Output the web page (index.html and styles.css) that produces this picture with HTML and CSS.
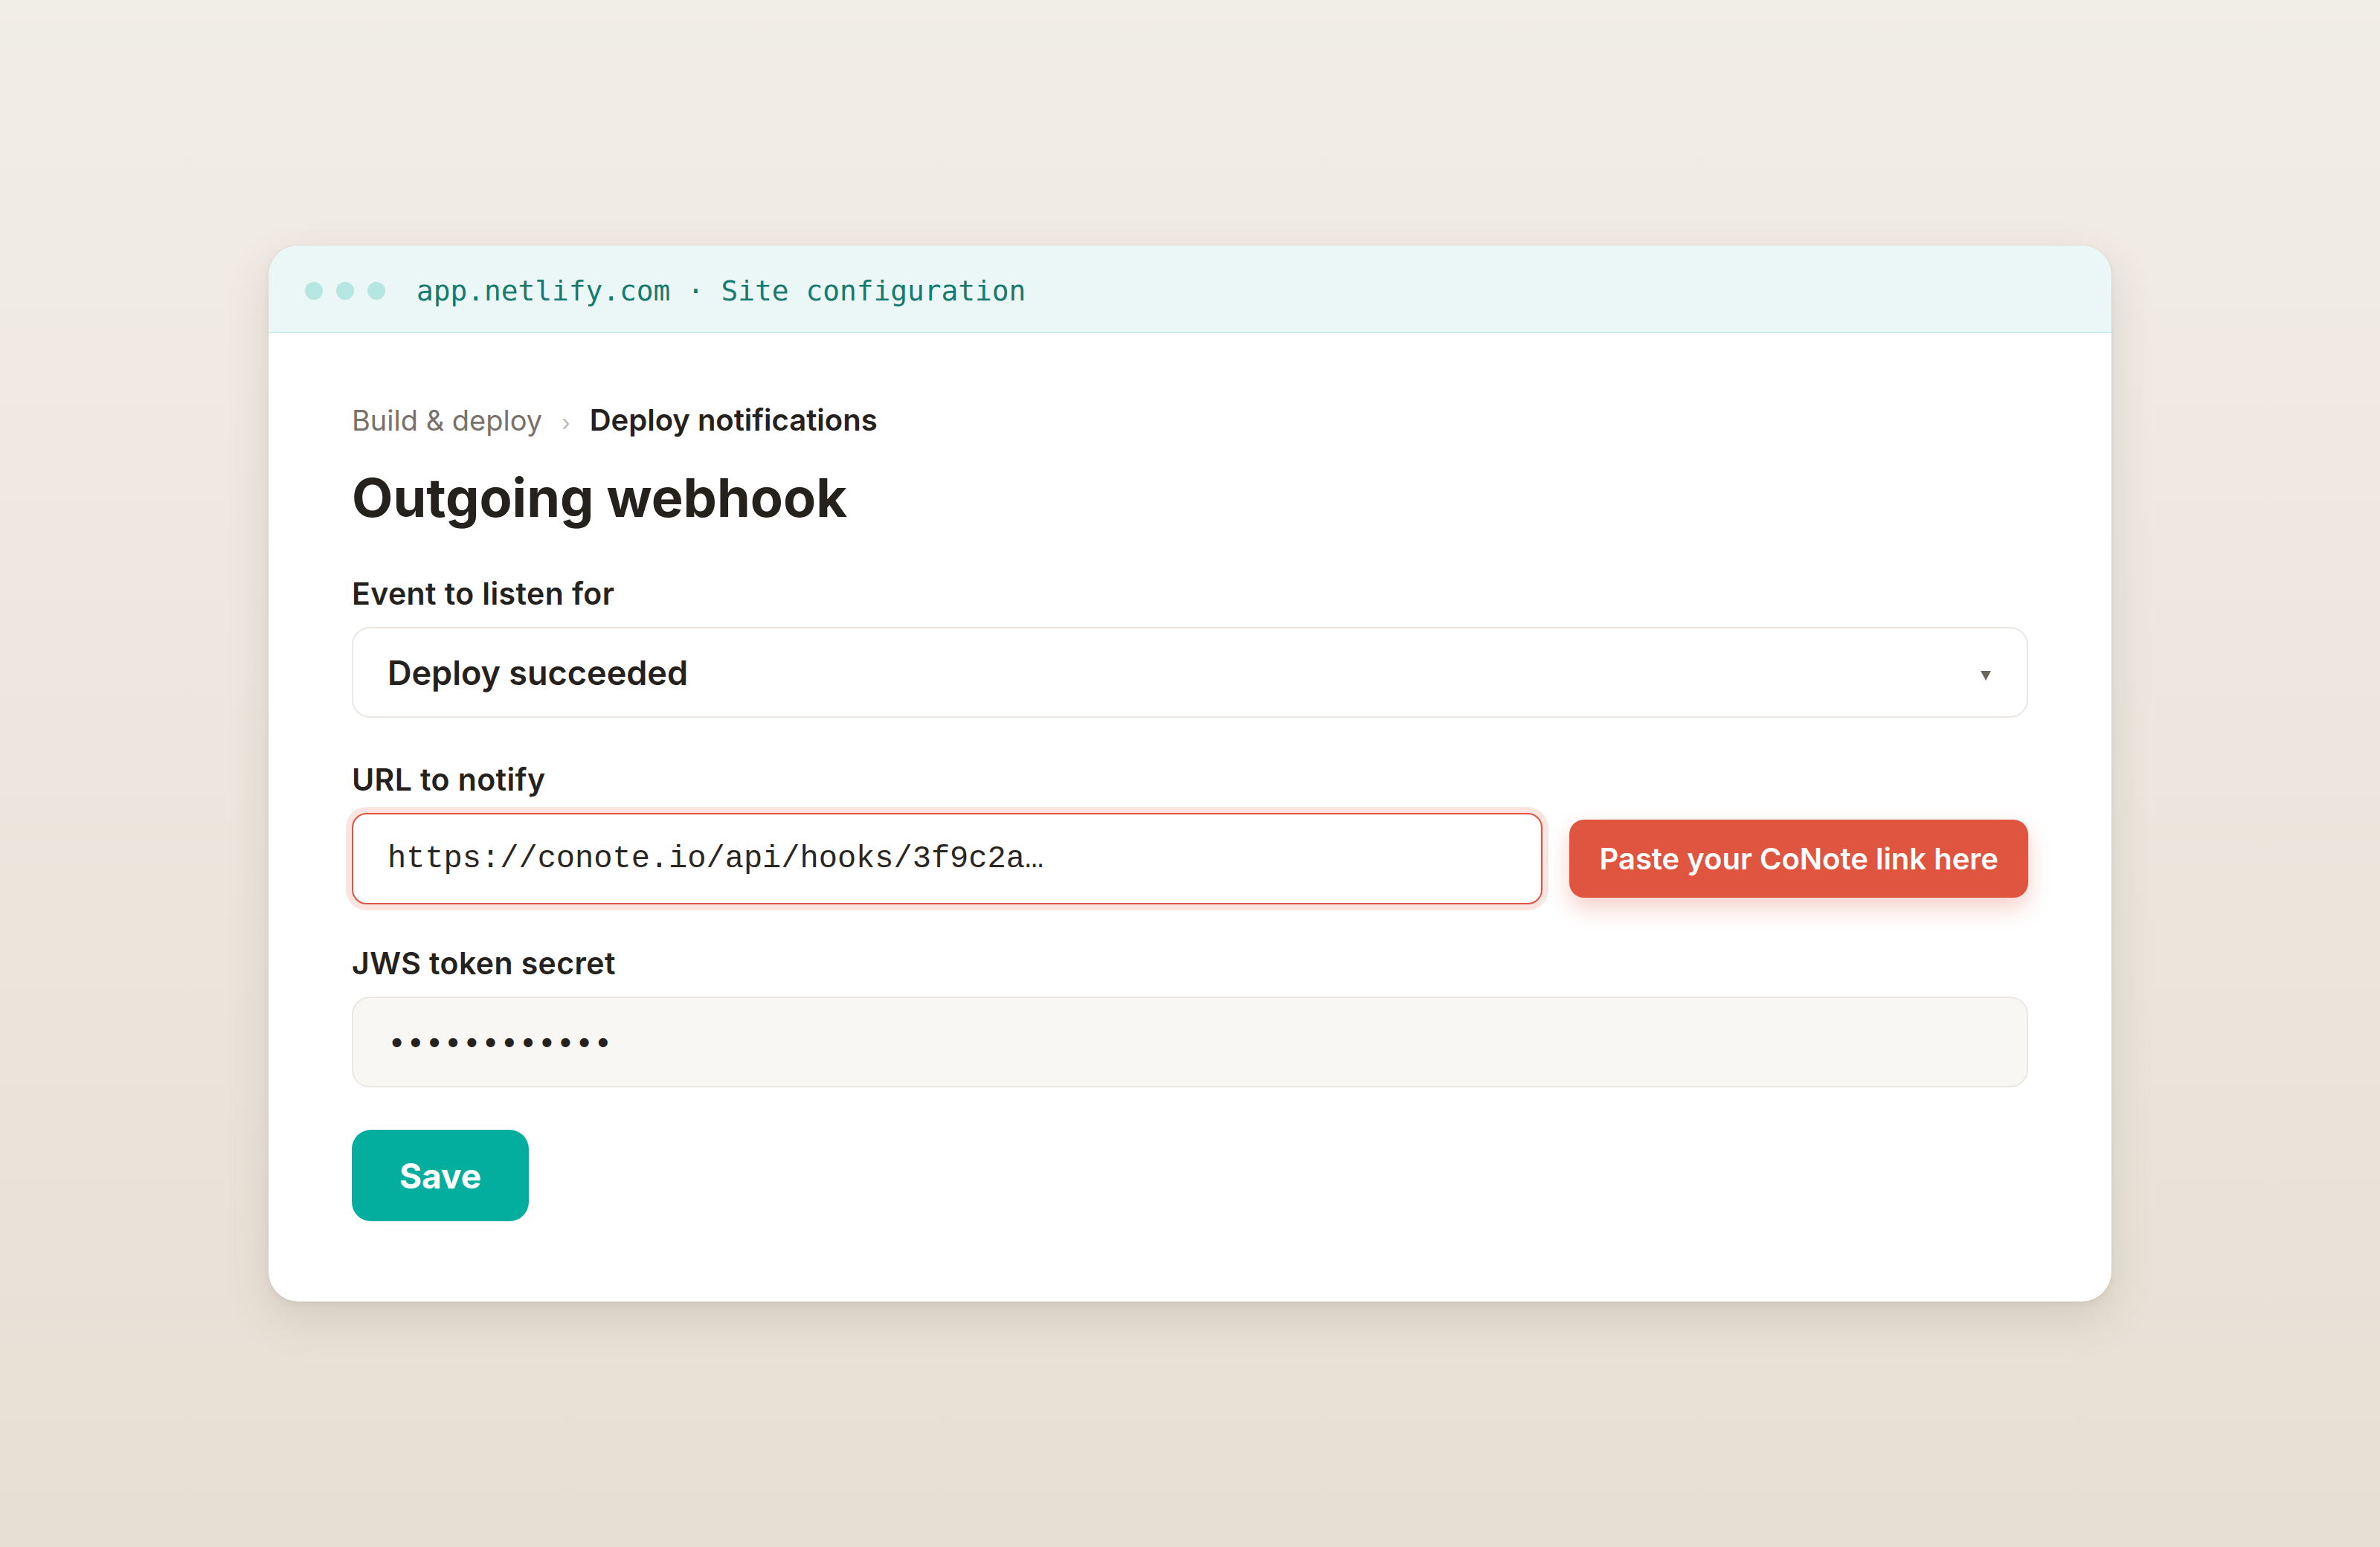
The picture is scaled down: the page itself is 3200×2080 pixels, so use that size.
FILE: index.html
```html
<!doctype html>
<html>
  <head>
    <meta charset="utf-8">
    <title>Outgoing webhook</title>
    <link rel="stylesheet" href="styles.css">
  </head>
  <body>
    <div class="window">
      <div class="titlebar">
        <span class="dots"><i></i><i></i><i></i></span>
        <span class="address">app.netlify.com · Site configuration</span>
      </div>
      <div class="panel">
        <div class="crumbs">
          <span class="crumb">Build &amp; deploy</span>
          <span class="sep">›</span>
          <span class="crumb current">Deploy notifications</span>
        </div>
        <h1>Outgoing webhook</h1>

        <label class="label">Event to listen for</label>
        <div class="field select">
          <span>Deploy succeeded</span>
          <svg class="caret" width="14" height="13" viewBox="0 0 14 13"><polygon points="0,0 14,0 7,13" fill="#6b665f"/></svg>
        </div>

        <label class="label">URL to notify</label>
        <div class="url-row">
          <div class="field url">https://conote.io/api/hooks/3f9c2a…</div>
          <button class="paste">Paste your CoNote link here</button>
        </div>

        <label class="label">JWS token secret</label>
        <div class="field secret">••••••••••••</div>

        <button class="save">Save</button>
      </div>
    </div>
  </body>
</html>
```

FILE: styles.css
```css
* {
  box-sizing: border-box;
}
html, body {
  margin: 0;
  height: 100%;
}
body {
  display: flex;
  align-items: center;
  justify-content: center;
  background: linear-gradient(180deg, #f1ede7 0%, #e8dfd4 100%);
  font-family: Inter, "Noto Sans", sans-serif;
  color: #25211d;
}
.window {
  width: 2478px;
  background: #fff;
  border-radius: 40px;
  overflow: hidden;
  box-shadow: 0 0 0 1px rgba(120,100,80,.08),
              0 24px 60px rgba(90,70,50,.14),
              0 4px 10px rgba(90,70,50,.06);
}
.titlebar {
  height: 118px;
  display: flex;
  align-items: center;
  padding-left: 49px;
  padding-top: 6px;
  background: #ebf7f6;
  border-bottom: 2px solid #cdeeea;
}
.dots {
  display: flex;
  gap: 18px;
}
.dots i {
  width: 24px;
  height: 24px;
  border-radius: 50%;
  background: #b6e6e1;
}
.address {
  margin-left: 42px;
  font-family: "DejaVu Sans Mono", monospace;
  font-size: 37.8px;
  color: #157a70;
}
.panel {
  padding: 94px 112px 108px;
}
.crumbs {
  display: flex;
  align-items: baseline;
  font-size: 38px;
  line-height: 46px;
}
.crumb {
  color: #78726b;
}
.crumb.current {
  color: #25211d;
  font-size: 40px;
  font-weight: 600;
}
.sep {
  margin: 0 26px;
  color: #bdb8b1;
  font-size: 30px;
}
h1 {
  margin: 35px 0 63px;
  font-size: 72px;
  line-height: 86px;
  font-weight: 700;
}
.label {
  display: block;
  margin-bottom: 22px;
  font-size: 41px;
  line-height: 46px;
  font-weight: 600;
  letter-spacing: 0.01em;
}
.field {
  display: flex;
  align-items: center;
  height: 122px;
  padding: 0 46px;
  border: 2px solid #ebe7e2;
  border-radius: 24px;
  background: #fff;
  margin-bottom: 60px;
}
.select {
  justify-content: space-between;
  font-size: 45px;
  font-weight: 600;
}
.caret {
  margin: 8px 2px 0 0;
}
.url-row {
  display: flex;
  align-items: center;
  gap: 36px;
  margin-bottom: 56px;
}
.url {
  flex: 1;
  height: 123px;
  margin: 0;
  border-color: #e0553f;
  border-radius: 20px;
  box-shadow: 0 0 0 8px #fce4e0;
  font-family: "Liberation Mono", monospace;
  font-size: 42px;
  color: #2a2622;
}
button {
  font-family: inherit;
  border: 0;
  color: #fff;
  cursor: pointer;
}
.paste {
  height: 105px;
  padding: 0 40px;
  border-radius: 20px;
  background: #e0553f;
  font-size: 40px;
  font-weight: 600;
  box-shadow: 0 14px 30px rgba(224,85,63,.28);
}
.secret {
  margin-bottom: 57px;
  padding-top: 8px;
  background: #f8f7f4;
  font-family: "Liberation Mono", monospace;
  font-size: 42px;
  font-weight: 700;
  color: #25211d;
}
.save {
  display: block;
  width: 238px;
  height: 123px;
  border-radius: 26px;
  background: #03ae9f;
  font-size: 46px;
  font-weight: 700;
}
```
